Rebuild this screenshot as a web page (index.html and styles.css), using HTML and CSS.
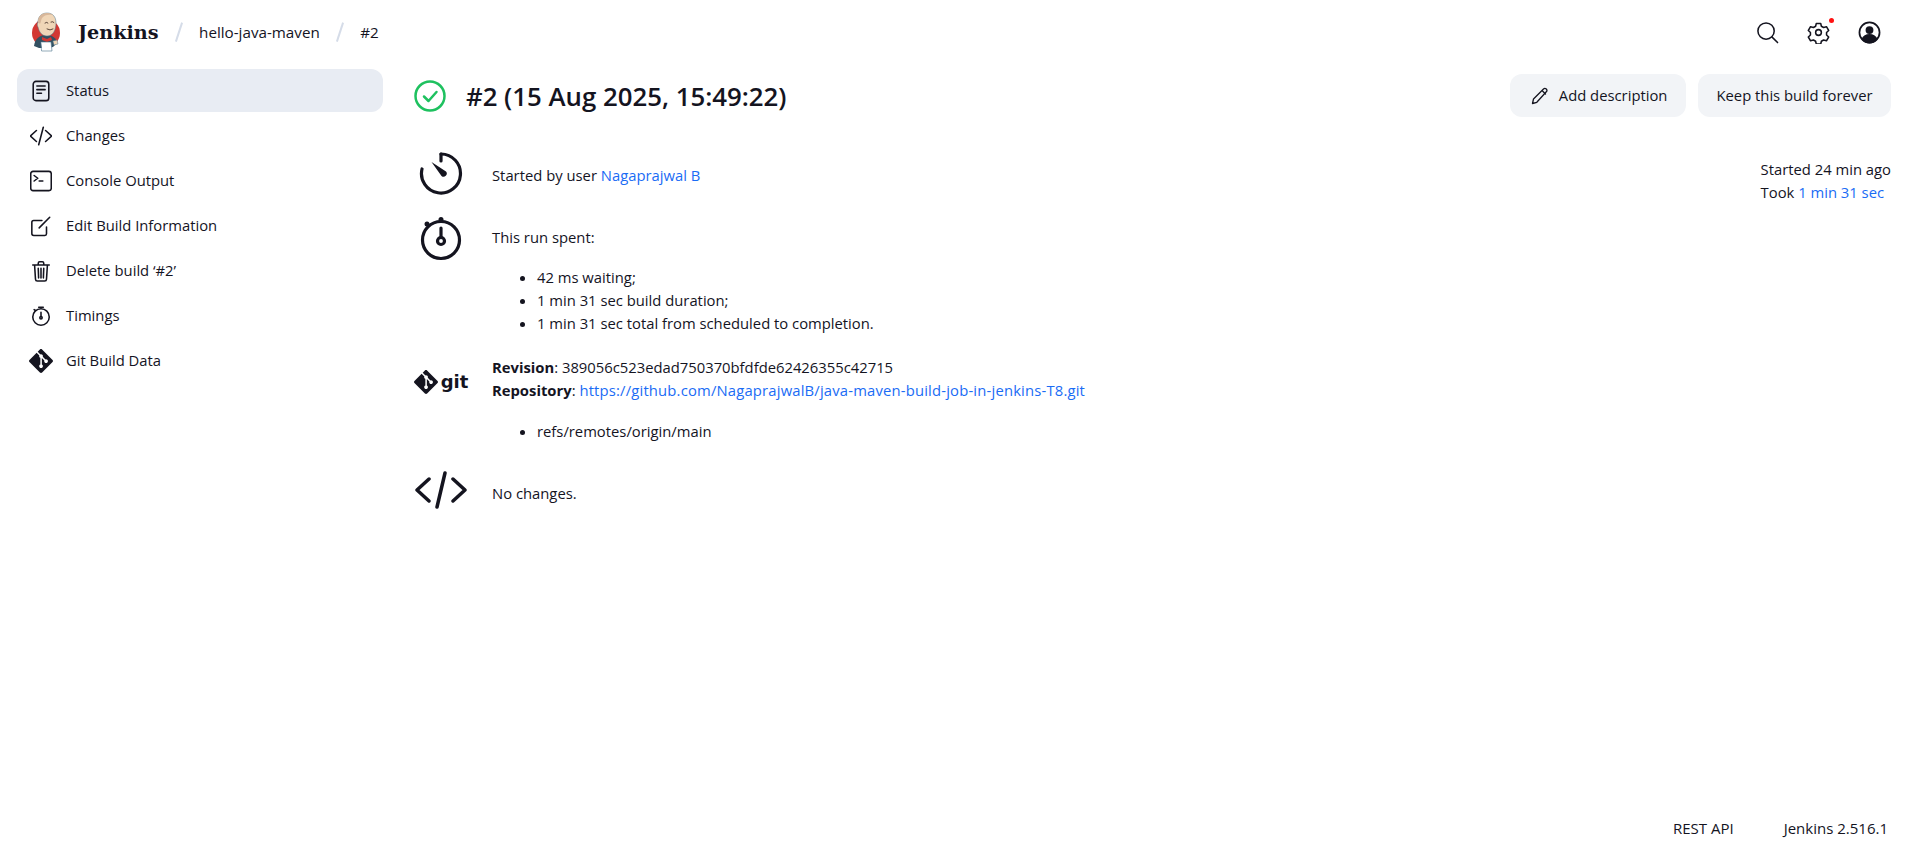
FILE: index.html
```html
<!DOCTYPE html>
<html lang="en">
<head>
    <meta charset="UTF-8">
    <title>hello-java-maven #2 [Jenkins]</title>
    <link rel="stylesheet" href="styles.css">
</head>
<body>
    <header class="top-bar">
        <a class="brand">
            <svg class="brand-logo" viewBox="0 0 32 40">
                <circle cx="16" cy="21" r="14" fill="#d33833"/>
                <path d="M4 34c1-7 5-11 12-11s10 3 11 8l-4 4-5 1H9z" fill="#335061"/>
                <path d="M8 10c0-6 4-9 9-9 6 0 9 4 9 10 0 7-3 13-9 13-5 0-8-4-9-9-1-1-1-3 0-5z" fill="#f0d6b7" stroke="#49728b" stroke-width=".5"/>
                <path d="M8 10c0-6 4-9 9-9 3 0 5 1 6 2-5-1-9 0-11 3-1 2-1 4-2 6z" fill="#d8b79a"/>
                <path d="M15 11q2-1.500 3 0M21 10q2-1 3 .5M17 17q3 2 6 0" fill="none" stroke="#49362c" stroke-width=".9"/>
                <path d="M12 25l5 2 4-2 1 3-5 2-5-2z" fill="#d33833"/>
                <path d="M11 30h10l1 9H12z" fill="#fff" stroke="#49728b" stroke-width=".6"/>
                <path d="M23 29l4-1 1 4-4 1z" fill="#f0d6b7" stroke="#49728b" stroke-width=".5"/>
            </svg>
            <span class="brand-name">Jenkins</span>
        </a>
        <span class="crumb-sep"></span>
        <a class="crumb">hello-java-maven</a>
        <span class="crumb-sep"></span>
        <a class="crumb">#2</a>
        <div class="top-actions">
            <svg class="top-icon" viewBox="0 0 24 24"><circle cx="10.500" cy="10.500" r="8.500"/><path d="M16.800 16.800l5.700 5.700"/></svg>
            <span class="gear-wrap">
                <svg class="top-icon" viewBox="0 0 24 24"><path d="M9.700 2.500h4.600l.7 3 2.300 1.300 3-.9 2.300 4-2.200 2.100v2.600l2.200 2.100-2.300 4-3-.9-2.300 1.300-.7 3H9.700l-.7-3-2.300-1.300-3 .9-2.300-4 2.200-2.100v-2.600L1.400 9.900l2.300-4 3 .9L9 5.500z"/><circle cx="12" cy="12" r="3"/></svg>
                <span class="gear-dot"></span>
            </span>
            <svg class="top-icon user" viewBox="0 0 24 24"><circle cx="12" cy="12" r="10.500"/><circle cx="12" cy="9.500" r="3.200" fill="#14141f"/><path d="M4.500 19c1.500-3 4.200-4.500 7.500-4.500s6 1.500 7.500 4.500c-2 2.200-4.700 3.500-7.500 3.500s-5.500-1.300-7.500-3.500z" fill="#14141f"/></svg>
        </div>
    </header>

    <div class="page">
        <nav class="side">
            <a class="side-item active">
                <svg class="side-icon" viewBox="0 0 24 24"><rect x="3.500" y="1.500" width="17" height="21" rx="3"/><path d="M7.500 6.500h9M7.500 10.500h9M7.500 14.500h5"/></svg>
                Status
            </a>
            <a class="side-item">
                <svg class="side-icon" viewBox="0 0 24 24"><path d="M7 6l-6.500 6 6.500 6M17 6l6.500 6-6.500 6M14.500 2.500l-5 19"/></svg>
                Changes
            </a>
            <a class="side-item">
                <svg class="side-icon" viewBox="0 0 24 24"><rect x=".8" y="1.500" width="22.400" height="21" rx="2.500"/><path d="M4.500 6l4 3-4 3M10 12h4"/></svg>
                Console Output
            </a>
            <a class="side-item">
                <svg class="side-icon" viewBox="0 0 24 24"><path d="M18 13v7.500a1.800 1.800 0 0 1-1.800 1.800H4a2 2 0 0 1-2-2V8a2 2 0 0 1 2-2h9M10 14L21.500 2.500"/></svg>
                Edit Build Information
            </a>
            <a class="side-item">
                <svg class="side-icon" viewBox="0 0 24 24"><path d="M3 5.500h18M9 5.500V3.500q0-1.500 1.500-1.500h3q1.500 0 1.500 1.500v2M5 5.500l1 15.500q.1 2 2 2h8q1.900 0 2-2l1-15.500M9 9l.4 10.500M12 9v10.500M15 9l-.4 10.500"/></svg>
                Delete build ‘#2’
            </a>
            <a class="side-item">
                <svg class="side-icon" viewBox="0 0 24 24"><circle cx="12" cy="13" r="9"/><circle cx="12" cy="14" r="1.300"/><path d="M12 8v4.500M9.500 2.500h5M4.500 5l1.500 1"/></svg>
                Timings
            </a>
            <a class="side-item">
                <svg class="side-icon solid" viewBox="0 0 24 24"><path d="M23.546 10.930L13.067.452c-.604-.603-1.582-.603-2.188 0L8.708 2.627l2.760 2.760c.645-.215 1.379-.07 1.889.441.516.515.658 1.258.438 1.900l2.658 2.660c.645-.223 1.387-.078 1.900.435.721.72.721 1.884 0 2.604-.719.719-1.881.719-2.600 0-.539-.541-.674-1.337-.404-1.996L12.860 8.955v6.525c.176.086.342.203.488.348.713.721.713 1.883 0 2.600-.719.721-1.889.721-2.609 0-.719-.719-.719-1.879 0-2.598.182-.18.387-.316.605-.406V8.835c-.217-.091-.424-.222-.6-.401-.545-.545-.676-1.342-.396-2.009L7.636 3.700.45 10.881c-.6.605-.6 1.584 0 2.189l10.480 10.477c.604.604 1.582.604 2.186 0l10.430-10.430c.605-.603.605-1.582 0-2.187"/></svg>
                Git Build Data
            </a>
        </nav>

        <main class="content">
            <div class="title-row">
                <svg class="status-icon" viewBox="0 0 32 32"><circle cx="16" cy="16" r="14.500"/><path d="M10 16.500l4.500 4.500 8-9"/></svg>
                <h1 class="title">#2 (15 Aug 2025, 15:49:22)</h1>
                <div class="title-buttons">
                    <a class="btn btn-add">
                        <svg class="btn-icon" viewBox="0 0 18 18"><path d="M1.500 16.500l1-4.500L12.500 2q1.300-1.200 2.800 0 1.300 1.400 0 2.800L5.800 15.300zM11 3.500l3.500 3.500"/></svg>
                        Add description
                    </a>
                    <a class="btn">Keep this build forever</a>
                </div>
            </div>

            <section class="row row-started">
                <div class="row-icon">
                    <svg class="big-icon" viewBox="0 0 44 46"><path d="M22 4a19.500 19.500 0 1 1-19 15"/><path d="M22 4v7"/><path d="M12.500 12L27 21.500a3.200 3.200 0 0 1-4.500 4.500z" class="fill"/></svg>
                </div>
                <p class="row-text">Started by user <a class="link">Nagaprajwal B</a></p>
                <div class="run-meta">
                    <div>Started 24 min ago</div>
                    <div>Took <a class="link">1 min 31 sec</a></div>
                </div>
            </section>

            <section class="row row-spent">
                <div class="row-icon">
                    <svg class="big-icon timer" viewBox="0 0 44 46"><circle cx="22" cy="25" r="18.500"/><circle cx="22" cy="26" r="3.500"/><path d="M22 22.500V13"/><circle cx="22" cy="4.500" r="2.500" class="fill"/><circle cx="8" cy="9" r="2.500" class="fill"/></svg>
                </div>
                <div class="row-body">
                    <p class="row-line">This run spent:</p>
                    <ul class="plain-list">
                        <li>42 ms waiting;</li>
                        <li>1 min 31 sec build duration;</li>
                        <li>1 min 31 sec total from scheduled to completion.</li>
                    </ul>
                </div>
            </section>

            <section class="row row-git">
                <div class="row-icon">
                    <span class="git-mark">
                        <svg class="git-icon" viewBox="0 0 24 24"><path d="M23.546 10.930L13.067.452c-.604-.603-1.582-.603-2.188 0L8.708 2.627l2.760 2.760c.645-.215 1.379-.07 1.889.441.516.515.658 1.258.438 1.900l2.658 2.660c.645-.223 1.387-.078 1.900.435.721.72.721 1.884 0 2.604-.719.719-1.881.719-2.600 0-.539-.541-.674-1.337-.404-1.996L12.860 8.955v6.525c.176.086.342.203.488.348.713.721.713 1.883 0 2.600-.719.721-1.889.721-2.609 0-.719-.719-.719-1.879 0-2.598.182-.18.387-.316.605-.406V8.835c-.217-.091-.424-.222-.6-.401-.545-.545-.676-1.342-.396-2.009L7.636 3.700.45 10.881c-.6.605-.6 1.584 0 2.189l10.480 10.477c.604.604 1.582.604 2.186 0l10.430-10.430c.605-.603.605-1.582 0-2.187"/></svg>
                        <span class="git-word">git</span>
                    </span>
                </div>
                <div class="row-body">
                    <p class="row-line"><b>Revision</b>: 389056c523edad750370bfdfde62426355c42715</p>
                    <p class="row-line"><b>Repository</b>: <a class="link repo-link">https://github.com/NagaprajwalB/java-maven-build-job-in-jenkins-T8.git</a></p>
                    <ul class="plain-list">
                        <li>refs/remotes/origin/main</li>
                    </ul>
                </div>
            </section>

            <section class="row row-changes">
                <div class="row-icon">
                    <svg class="big-icon code" viewBox="0 0 52 38"><path d="M14 8L2 19l12 11M38 8l12 11-12 11M30 2l-8 34"/></svg>
                </div>
                <p class="row-text">No changes.</p>
            </section>
        </main>
    </div>

    <footer class="foot">
        <a class="foot-link">REST API</a>
        <a class="foot-link">Jenkins 2.516.1</a>
    </footer>
</body>
</html>
```

FILE: styles.css
```css
* {
    margin: 0;
    box-sizing: border-box;
}

body {
    display: flex;
    flex-direction: column;
    min-height: 856px;
    height: 856px;
    overflow: hidden;
    background-color: white;
    color: #14141f;
    font-family: "Open Sans", sans-serif;
    font-size: 14.800px;
    line-height: 23px;
}

svg {
    fill: none;
    stroke: #14141f;
    stroke-linecap: round;
    stroke-linejoin: round;
}

/* top bar */

.top-bar {
    display: flex;
    align-items: center;
    height: 64px;
    padding: 0 38px 0 30px;
    flex: none;
}

.brand {
    display: flex;
    align-items: center;
    gap: 16px;
}

.brand-logo {
    width: 32px;
    height: 40px;
    stroke: none;
}

.brand-name {
    font-family: "DejaVu Serif", serif;
    font-weight: bold;
    font-size: 19.200px;
}

.crumb {
    font-size: 15.200px;
}

.crumb-sep {
    width: 1.500px;
    height: 20px;
    margin: 0 19.500px;
    background-color: #d5dce8;
    transform: rotate(18deg);
}

.top-actions {
    display: flex;
    align-items: center;
    gap: 28px;
    margin-left: auto;
}

.top-icon {
    display: block;
    width: 23px;
    height: 23px;
    stroke-width: 1.600;
}

.top-icon.user {
    stroke-width: 1.800;
}

.gear-wrap {
    position: relative;
    display: block;
}

.gear-dot {
    position: absolute;
    top: -3px;
    right: -4px;
    width: 5px;
    height: 5px;
    border-radius: 50%;
    background-color: #f11;
}

/* side panel */

.page {
    display: flex;
    flex: 1;
    min-height: 0;
}

.side {
    display: flex;
    flex-direction: column;
    gap: 2px;
    flex: none;
    width: 366px;
    margin: 5px 0 0 17px;
}

.side-item {
    display: flex;
    align-items: center;
    gap: 14px;
    height: 43px;
    padding-left: 13px;
    border-radius: 12px;
}

.side-item.active {
    background-color: #e8ecf3;
}

.side-icon {
    width: 22px;
    height: 22px;
    stroke-width: 1.700;
    flex: none;
}

.side-icon.solid {
    width: 24px;
    height: 24px;
    margin: 0 -1px;
    fill: #14141f;
    stroke: none;
}

/* main content */

.content {
    flex: 1;
    margin: 10px 28px 0 31px;
}

.title-row {
    display: flex;
    align-items: center;
    height: 43px;
    margin-bottom: 33px;
}

.status-icon {
    width: 32px;
    height: 32px;
    stroke: #1ec15f;
    stroke-width: 2.500;
    flex: none;
}

.title {
    margin-left: 20px;
    font-size: 25.800px;
    font-weight: 600;
    line-height: 32px;
}

.title-buttons {
    display: flex;
    gap: 12px;
    margin-left: auto;
}

.btn {
    display: flex;
    align-items: center;
    gap: 8px;
    height: 43px;
    padding: 0 18.500px;
    border-radius: 12px;
    background-color: #f2f4f7;
}

.btn-add {
    gap: 10px;
    padding-left: 21px;
}

.btn-icon {
    width: 18px;
    height: 18px;
    stroke-width: 1.300;
}

.row {
    display: flex;
}

.row-icon {
    display: flex;
    justify-content: center;
    flex: none;
    width: 54px;
    margin-right: 24px;
}

.row-text {
    margin-top: 14px;
}

.big-icon {
    display: block;
    width: 44px;
    height: 46px;
    stroke-width: 3.200;
}

.big-icon .fill {
    fill: #14141f;
    stroke: none;
}

.big-icon.code {
    width: 52px;
    height: 38px;
    stroke-width: 3.500;
}

.row-started {
    height: 65px;
}

.run-meta {
    margin-left: auto;
    margin-top: 8px;
}

.row-spent {
    height: 141px;
}

.row-line {
    white-space: nowrap;
}

.row-spent .row-line {
    margin-top: 11px;
}

.plain-list {
    margin-top: 17px;
    padding-left: 45px;
}

.row-git {
    height: 115px;
}

.row-git .plain-list {
    margin-top: 18px;
}

.row-changes .row-text {
    margin-top: 11px;
}

.git-mark {
    display: flex;
    align-items: center;
    gap: 3px;
    height: 24px;
    margin-top: 14px;
}

.git-icon {
    width: 24px;
    height: 24px;
    fill: #14141f;
    stroke: none;
}

.git-word {
    font-family: "DejaVu Sans", sans-serif;
    font-weight: bold;
    font-size: 18px;
    line-height: 24px;
}

.link {
    color: #1a6cf5;
}

.repo-link {
    letter-spacing: .18px;
}

/* footer */

.foot {
    display: flex;
    justify-content: flex-end;
    gap: 50px;
    flex: none;
    height: 56px;
    padding: 17px 31px 0 0;
    font-size: 15px;
}
```
